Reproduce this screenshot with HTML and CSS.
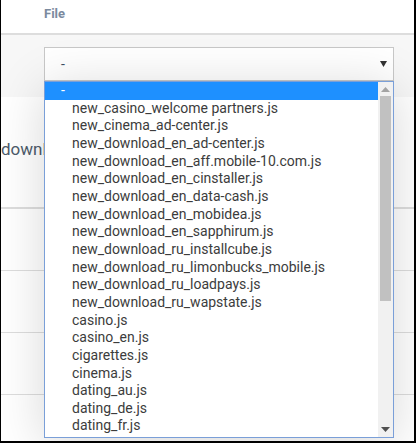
FILE: index.html
```html
<!DOCTYPE html>
<html lang="en">
<head>
    <meta charset="UTF-8">
    <meta name="viewport" content="width=device-width, initial-scale=1.0">
    <title>File</title>
    <link rel="stylesheet" href="styles.css">
</head>
<body>
    <div class="frame">
        <div class="head">
            <span class="label">File</span>
        </div>
        <div class="filter">
            <div class="picker">
                <div class="select">
                    <span class="value">-</span>
                    <svg class="caret" width="7" height="6" viewBox="0 0 7 6"><path d="M0 0h7L3.5 6z" fill="#333"/></svg>
                </div>
                <div class="listbox">
                    <div class="options">
                        <div class="opt opt-top selected">-</div>
                        <div class="opt">new_casino_welcome partners.js</div>
                        <div class="opt">new_cinema_ad-center.js</div>
                        <div class="opt">new_download_en_ad-center.js</div>
                        <div class="opt">new_download_en_aff.mobile-10.com.js</div>
                        <div class="opt">new_download_en_cinstaller.js</div>
                        <div class="opt">new_download_en_data-cash.js</div>
                        <div class="opt">new_download_en_mobidea.js</div>
                        <div class="opt">new_download_en_sapphirum.js</div>
                        <div class="opt">new_download_ru_installcube.js</div>
                        <div class="opt">new_download_ru_limonbucks_mobile.js</div>
                        <div class="opt">new_download_ru_loadpays.js</div>
                        <div class="opt">new_download_ru_wapstate.js</div>
                        <div class="opt">casino.js</div>
                        <div class="opt">casino_en.js</div>
                        <div class="opt">cigarettes.js</div>
                        <div class="opt">cinema.js</div>
                        <div class="opt">dating_au.js</div>
                        <div class="opt">dating_de.js</div>
                        <div class="opt">dating_fr.js</div>
                    </div>
                    <div class="scrollbar">
                        <svg class="arrow" width="9" height="5" viewBox="0 0 9 5"><path d="M0 5h9L4.5 0z" fill="#a3a3a3"/></svg>
                        <div class="thumb"></div>
                        <svg class="arrow arrow-down" width="9" height="5" viewBox="0 0 9 5"><path d="M0 0h9L4.5 5z" fill="#505050"/></svg>
                    </div>
                </div>
            </div>
        </div>
        <div class="row row-first">
            <span class="name">downloads</span>
        </div>
        <div class="row"></div>
        <div class="row"></div>
        <div class="row"></div>
        <div class="row row-last"></div>
    </div>
</body>
</html>
```

FILE: styles.css
```css
html, body {
    margin: 0;
    padding: 0;
    background: #fff;
}
body {
    width: 416px;
    height: 443px;
    overflow: hidden;
    font-family: Roboto, "Liberation Sans", sans-serif;
}
.frame {
    box-sizing: border-box;
    width: 416px;
    height: 443px;
    border-left: 1px solid #000;
    border-right: 2px solid #000;
    border-bottom: 2px solid #000;
    overflow: hidden;
    position: relative;
}
.head {
    height: 33px;
    border-bottom: 2px solid #ddd;
    padding-left: 43px;
    box-sizing: content-box;
}
.label {
    display: block;
    padding-top: 6px;
    font-size: 13px;
    font-weight: bold;
    color: #7b8a9e;
}
.filter {
    height: 62px;
    background: #f7f7f7;
    padding: 12px 0 0 43px;
    box-sizing: border-box;
}
.picker {
    position: relative;
    width: 350px;
    z-index: 2;
}
.select {
    box-sizing: border-box;
    height: 34px;
    border: 1px solid #c8c8c8;
    background: #fff;
    display: flex;
    align-items: center;
    justify-content: space-between;
    padding: 0 6px 0 16px;
    font-size: 14px;
    color: #3d4f63;
}
.listbox {
    position: absolute;
    top: 34px;
    left: 0;
    width: 350px;
    height: 357px;
    box-sizing: border-box;
    border: 1px solid #7a9fd8;
    background: #fff;
    box-shadow: 0 6px 48px rgba(0, 0, 0, 0.16);
    display: flex;
}
.options {
    flex: 1;
    font-size: 14px;
    color: #3c3c3c;
}
.opt {
    height: 17.67px;
    line-height: 17.67px;
    padding-left: 27px;
    white-space: nowrap;
}
.opt-top {
    padding-left: 16px;
}
.selected {
    background: #1e90ff;
    color: #fff;
}
.scrollbar {
    width: 15px;
    background: #f1f1f1;
    display: flex;
    flex-direction: column;
    align-items: center;
}
.arrow {
    margin-top: 5px;
    flex: none;
}
.arrow-down {
    margin-top: auto;
    margin-bottom: 5px;
}
.thumb {
    width: 11px;
    height: 205px;
    margin-top: 4px;
    background: #c1c1c1;
}
.row {
    height: 61px;
    border-bottom: 1px solid #ddd;
}
.row-first {
    height: 110px;
    border-bottom: 2px solid #ddd;
    display: flex;
    align-items: center;
}
.row-last {
    border-bottom: none;
}
.name {
    font-size: 17px;
    color: #4d5b6b;
    margin-top: -6px;
}
```
